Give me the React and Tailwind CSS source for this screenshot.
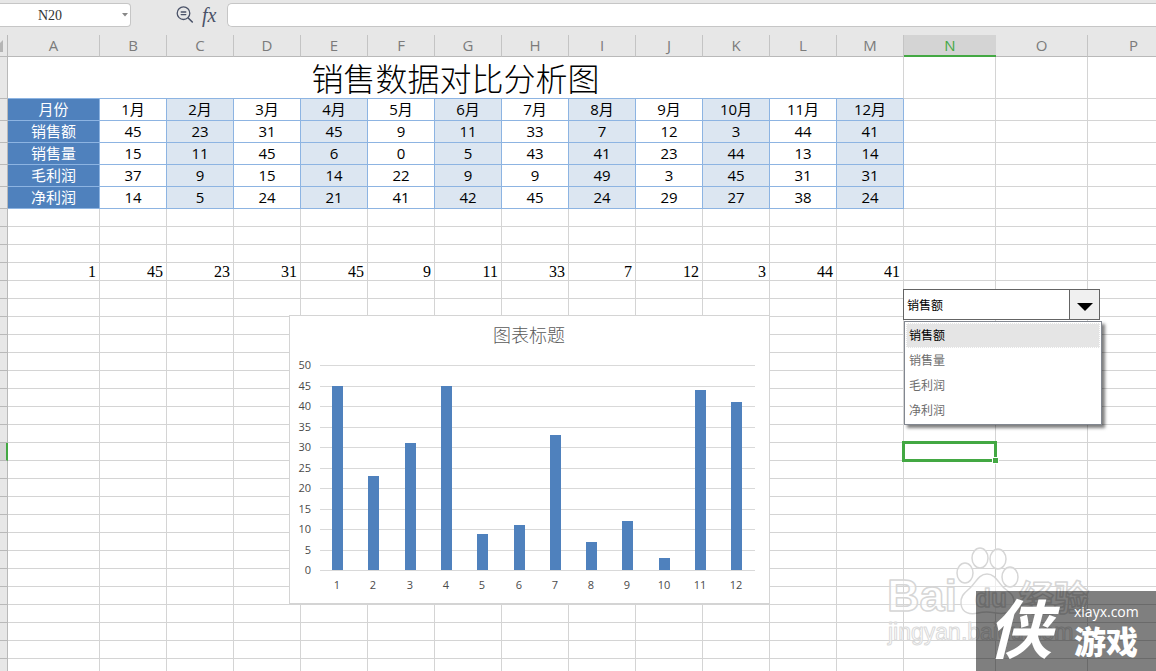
import { useState } from "react";

const columns = ["A", "B", "C", "D", "E", "F", "G", "H", "I", "J", "K", "L", "M", "N", "O", "P"];
const table = [
  ["月份", "1月", "2月", "3月", "4月", "5月", "6月", "7月", "8月", "9月", "10月", "11月", "12月"],
  ["销售额", 45, 23, 31, 45, 9, 11, 33, 7, 12, 3, 44, 41],
  ["销售量", 15, 11, 45, 6, 0, 5, 43, 41, 23, 44, 13, 14],
  ["毛利润", 37, 9, 15, 14, 22, 9, 9, 49, 3, 45, 31, 31],
  ["净利润", 14, 5, 24, 21, 41, 42, 45, 24, 29, 27, 38, 24],
];
const metrics = ["销售额", "销售量", "毛利润", "净利润"];
const SELECTED = "N";

function MagnifierIcon() {
  return (
    <svg width="18" height="18" viewBox="0 0 18 18" fill="none" stroke="#4a5268" strokeWidth="1.3" strokeLinecap="round">
      <circle cx="7.5" cy="7.2" r="6.3" />
      <path d="M12.2 12 16.3 16" strokeWidth="1.6" />
      <path d="M5.2 6h4.6M5.2 8.6h4.6" />
    </svg>
  );
}

function FormulaBar() {
  return (
    <div className="flex h-[35px] items-start bg-[#e7e7e7] pt-[3px]">
      <div className="flex h-6 w-[131px] items-center rounded-r-[4px] border border-l-0 border-[#c6c6c6] bg-white">
        <input
          aria-label="名称框"
          defaultValue="N20"
          className="w-full min-w-0 bg-transparent pl-[38px] font-['Liberation_Serif','Noto_Sans_CJK_SC',serif] text-[14px] text-[#333] outline-none"
        />
        <button aria-label="展开名称" className="flex h-full w-2 shrink-0 items-center">
          <svg width="6" height="4" viewBox="0 0 6 4" fill="#888">
            <path d="M0 0h6L3 3.5z" />
          </svg>
        </button>
      </div>
      <div className="ml-[45px] flex h-6 w-[51px] items-center gap-2">
        <button aria-label="查找">
          <MagnifierIcon />
        </button>
        <button
          aria-label="插入函数"
          className="font-['Liberation_Serif',serif] text-[20px] leading-6 text-[#4a5268] italic"
        >
          fx
        </button>
      </div>
      <input
        aria-label="编辑栏"
        className="h-6 min-w-0 flex-1 rounded-l-[5px] border border-r-0 border-[#c6c6c6] bg-white px-2 text-sm outline-none"
      />
    </div>
  );
}

function EmptyCells({ count, from = 0 }) {
  return Array.from({ length: count }, (_, i) => (
    <td key={from + i} className="border-r border-b border-[#d4d4d4]" />
  ));
}

function RowHeader() {
  return <th scope="row" className="border-r border-b border-[#b9b9b9] bg-[#e7e7e7]" />;
}

function Sheet({ values, index }) {
  return (
    <table className="w-[1180px] table-fixed border-separate border-spacing-0">
      <colgroup>
        <col className="w-2" />
        <col className="w-[92px]" />
        {columns.slice(1, 13).map((c) => (
          <col key={c} className="w-[67px]" />
        ))}
        <col className="w-[92px]" />
        <col className="w-[92px]" />
        <col className="w-[92px]" />
      </colgroup>
      <thead>
        <tr className="h-[22px] text-[15px] leading-[18px]">
          <th className="border-r border-b border-[#b9b9b9] bg-[#e7e7e7] p-0">
            <svg width="3" height="12" viewBox="0 0 3 12" fill="#b5b5b5">
              <path d="M0 3 3 0v12H0z" />
            </svg>
          </th>
          {columns.map((c) =>
            c === SELECTED ? (
              <th key={c} scope="col" className="border-b-2 border-[#43a843] bg-[#d4d4d4] p-0 pb-px font-normal text-[#43a843]">
                {c}
              </th>
            ) : (
              <th key={c} scope="col" className="border-r border-b border-r-[#c4c4c4] border-b-[#b9b9b9] bg-[#e7e7e7] p-0 pb-0.5 font-normal text-[#7b7b7b]">
                {c}
              </th>
            )
          )}
        </tr>
      </thead>
      <tbody>
        <tr className="h-[42px]">
          <RowHeader />
          <td
            colSpan={13}
            className="border-r border-b border-r-[#d4d4d4] border-b-[#8db4e2] p-0 pt-[3px] text-center text-[32px] leading-[38px] font-light text-black"
          >
            销售数据对比分析图
          </td>
          <EmptyCells count={3} />
        </tr>
        {table.map((row) => (
          <tr key={row[0]} className="h-[22px] text-[15px] leading-[18px]">
            <RowHeader />
            {row.map((v, i) =>
              i === 0 ? (
                <th key={i} scope="row" className="border-r border-b border-[#8db4e2] bg-[#4f81bd] p-0 pb-0.5 font-normal text-white">
                  {v}
                </th>
              ) : (
                <td
                  key={i}
                  className={
                    i % 2 === 0
                      ? "border-r border-b border-[#8db4e2] bg-[#dce6f1] p-0 pb-0.5 text-center text-black"
                      : "border-r border-b border-[#8db4e2] p-0 pb-0.5 text-center text-black"
                  }
                >
                  {v}
                </td>
              )
            )}
            <EmptyCells count={3} />
          </tr>
        ))}
        {Array.from({ length: 26 }, (_, r) => (
          <tr key={r} className="h-[18px]">
            {r === 13 ? (
              <th scope="row" className="border-r-2 border-b border-r-[#43a843] border-b-[#b9b9b9] bg-[#d4d4d4]" />
            ) : (
              <RowHeader />
            )}
            {r === 3 ? (
              <>
                {[index, ...values].map((v, i) => (
                  <td
                    key={i}
                    className="border-r border-b border-[#d4d4d4] p-0 pt-px pr-[3px] text-right font-['Liberation_Serif',serif] text-[16px] leading-4 text-black"
                  >
                    {v}
                  </td>
                ))}
                <EmptyCells count={3} from={13} />
              </>
            ) : (
              <EmptyCells count={16} />
            )}
          </tr>
        ))}
      </tbody>
    </table>
  );
}

function Chart({ values }) {
  const ticks = [50, 45, 40, 35, 30, 25, 20, 15, 10, 5, 0];
  const y = (v) => Math.round(255.4 - v * 4.1);
  const center = (i) => Math.round(48 + i * 36.3);
  return (
    <svg width="481" height="289" viewBox="0 0 481 289" className="block bg-white font-['Open_Sans','Noto_Sans_CJK_SC',sans-serif]">
      <rect x="0.5" y="0.5" width="480" height="288" fill="#fff" stroke="#d4d4d4" />
      <text x="240" y="27" textAnchor="middle" fontSize="18" fontWeight="300" fill="#595959">
        图表标题
      </text>
      {ticks.map((t) => (
        <g key={t}>
          <path d={`M31 ${y(t) + 0.5}H466`} stroke="#d9d9d9" />
          <text x="22" y={y(t) + 4} textAnchor="end" fontSize="11" fill="#4a4a4a">
            {t}
          </text>
        </g>
      ))}
      {values.map((v, i) => (
        <g key={i}>
          <rect x={center(i) - 5} y={y(v)} width="11" height={255 - y(v)} fill="#4f81bd" />
          <text x={center(i)} y="274" textAnchor="middle" fontSize="11" fill="#4a4a4a">
            {i + 1}
          </text>
        </g>
      ))}
    </svg>
  );
}

function MetricPicker({ index, onChange }) {
  return (
    <div className="w-[200px] text-[12px]">
      <div className="flex h-[31px] w-[197px] border border-[#646464] bg-white">
        <select
          aria-label="数据项"
          value={index}
          onChange={(e) => onChange(Number(e.target.value))}
          className="min-w-0 flex-1 appearance-none bg-transparent pt-0.5 pl-[3px] text-black outline-none"
        >
          {metrics.map((m, i) => (
            <option key={m} value={i}>
              {m}
            </option>
          ))}
        </select>
        <button aria-label="展开列表" className="flex w-[30px] items-center justify-center border-l border-[#646464] bg-[#f0f0f0] pt-1">
          <svg width="16" height="8" viewBox="0 0 16 8">
            <path d="M0 0h16L8 8z" />
          </svg>
        </button>
      </div>
      <ul className="mt-px ml-px w-[198px] border border-[#828790] bg-white p-px shadow-[3px_3px_3px_rgba(0,0,0,0.5)]">
        {metrics.map((m, i) => (
          <li key={m} className="h-[25px]">
            <button
              onClick={() => onChange(i)}
              className={
                i === index
                  ? "block h-[25px] w-full border border-dotted border-white bg-[#e5e5e5] pl-[2px] text-left text-black"
                  : "block h-[25px] w-full border border-transparent pl-[2px] text-left text-[#6d6d6d]"
              }
            >
              {m}
            </button>
          </li>
        ))}
      </ul>
    </div>
  );
}

function BaiduMark() {
  return (
    <svg
      width="210"
      height="106"
      viewBox="0 0 210 106"
      fill="#fff"
      fillOpacity="0.6"
      stroke="#d6d6d6"
      strokeWidth="1.5"
      strokeLinejoin="round"
      className="font-['Liberation_Sans','Noto_Sans_CJK_SC',sans-serif]"
    >
      <text x="2" y="65" fontSize="45" fontWeight="700">Bai</text>
      <ellipse cx="80" cy="27" rx="8" ry="10" />
      <ellipse cx="95" cy="12" rx="8" ry="10" />
      <ellipse cx="113" cy="13" rx="8" ry="10" />
      <ellipse cx="125" cy="31" rx="8" ry="10" />
      <path d="M102 28c-8 0-11 8-16 13s-11 8-10 17 9 11 17 9 12-1 18 0 17 1 18-9-6-12-11-17-8-13-16-13z" />
      <text x="90" y="61" fontSize="26" fontWeight="700">du</text>
      <text x="134" y="65" fontSize="35" fontWeight="700">经验</text>
      <text x="3" y="94" fontSize="23" strokeWidth="1" stroke="#dadada">jingyan.baidu.com</text>
    </svg>
  );
}

function SiteBadge() {
  return (
    <div className="flex h-20 w-[180px] bg-black/50 text-white">
      <div className="w-[98px] pl-3 text-[64px] leading-[76px] font-bold italic">侠</div>
      <div className="pt-[11px]">
        <div className="text-[14px] leading-5">xiayx.com</div>
        <div className="text-[32px] leading-10 font-black">游戏</div>
      </div>
    </div>
  );
}

export default function App() {
  const [index, setIndex] = useState(0);
  const values = table[index + 1].slice(1);
  return (
    <div className="relative h-screen w-full overflow-hidden bg-white font-['Open_Sans','Noto_Sans_CJK_SC',sans-serif]">
      <FormulaBar />
      <Sheet values={values} index={index + 1} />
      <div className="absolute top-[315px] left-[289px]">
        <Chart values={values} />
      </div>
      <div className="absolute top-[289px] left-[903px]">
        <MetricPicker index={index} onChange={setIndex} />
      </div>
      <div className="absolute top-[441px] left-[902px] h-[21px] w-[95px] border-[3px] border-[#43a843]">
        <span className="absolute -right-[5px] -bottom-[5px] size-[7px] border border-white bg-[#43a843]" />
      </div>
      <div className="absolute right-[61px] bottom-[19px]">
        <BaiduMark />
      </div>
      <div className="absolute right-0 bottom-0">
        <SiteBadge />
      </div>
    </div>
  );
}
